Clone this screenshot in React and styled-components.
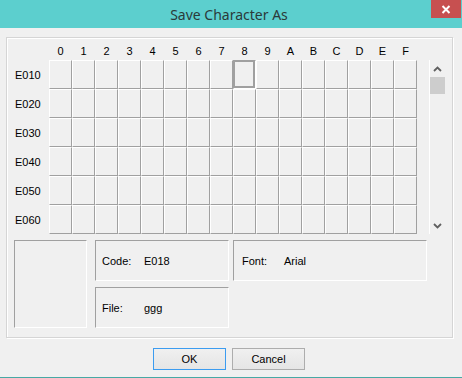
import React from 'react';
import styled, { createGlobalStyle } from 'styled-components';

const GlobalStyle = createGlobalStyle`
  html, body {
    margin: 0;
    padding: 0;
    background: #f0f0f0;
  }
`;

const Window = styled.div`
  width: 462px;
  height: 378px;
  box-sizing: border-box;
  background: #f0f0f0;
  border-bottom: 1px solid #47a9a5;
  display: flex;
  flex-direction: column;
  font-family: "Liberation Sans", Arial, sans-serif;
  font-size: 11px;
  color: #000;
`;

const TitleBar = styled.div`
  position: relative;
  height: 28px;
  flex: none;
  background: #5ccfce;
  display: flex;
  align-items: center;
  justify-content: center;
`;

const Title = styled.span`
  font-family: "Noto Sans", "Open Sans", sans-serif;
  font-size: 14px;
  color: #2b3a3a;
  padding-right: 4px;
`;

const CloseButton = styled.div`
  position: absolute;
  top: 0;
  right: 1px;
  width: 30px;
  height: 18px;
  background: #c75050;
  display: flex;
  align-items: center;
  justify-content: center;
`;

const Body = styled.div`
  padding: 9px 9px 0 6px;
`;

const Frame = styled.div`
  width: 447px;
  height: 301px;
  box-sizing: border-box;
  border: 1px solid #d5d5d5;
  box-shadow: inset 1px 1px 0 #fff, 1px 1px 0 #fff;
  display: flex;
  flex-direction: column;
`;

const HeaderRow = styled.div`
  display: grid;
  grid-template-columns: 42px repeat(16, 23px);
  height: 22px;
  box-sizing: border-box;
  padding-top: 7px;
  line-height: 13px;
`;

const ColHead = styled.span`
  text-align: center;
`;

const TableArea = styled.div`
  display: flex;
  height: 174px;
`;

const RowLabels = styled.div`
  width: 42px;
  display: flex;
  flex-direction: column;
`;

const RowLabel = styled.div`
  height: 29px;
  padding-left: 8px;
  display: flex;
  align-items: center;
  box-sizing: border-box;
`;

const CellGrid = styled.div`
  display: grid;
  grid-template-columns: repeat(16, 23px);
  grid-auto-rows: 29px;
`;

const Cell = styled.div`
  box-sizing: border-box;
  border: 1px solid;
  border-color: ${p => (p.$selected ? '#a0a0a0 #fff #fff #a0a0a0' : '#fff #a0a0a0 #a0a0a0 #fff')};
  box-shadow: ${p => (p.$selected ? 'inset 1px 1px 0 #a0a0a0, inset -2px -2px 0 #a0a0a0' : 'none')};
  background: #f0f0f0;
`;

const Scrollbar = styled.div`
  margin-left: 12px;
  width: 16px;
  box-sizing: border-box;
  border-left: 1px solid #fff;
  display: flex;
  flex-direction: column;
`;

const ArrowButton = styled.div`
  height: 17px;
  flex: none;
  display: flex;
  align-items: center;
  justify-content: center;
`;

const Track = styled.div`
  flex: 1;
`;

const Thumb = styled.div`
  height: 17px;
  background: #cdcdcd;
`;

const Details = styled.div`
  display: flex;
  margin-top: 6px;
  padding-left: 7px;
  height: 88px;
`;

const Sunken = styled.div`
  box-sizing: border-box;
  border: 1px solid;
  border-color: #a0a0a0 #fff #fff #a0a0a0;
`;

const Preview = styled(Sunken)`
  width: 73px;
  height: 88px;
`;

const InfoColumn = styled.div`
  display: flex;
  flex-direction: column;
  gap: 6px;
  margin-left: 8px;
`;

const InfoBox = styled(Sunken)`
  width: ${p => p.$width}px;
  height: 41px;
  display: flex;
  align-items: center;
  padding-left: ${p => p.$pad}px;
  margin-left: ${p => p.$offset || 0}px;
`;

const InfoLabel = styled.span`
  width: 42px;
  flex: none;
`;

const ButtonBar = styled.div`
  display: flex;
  gap: 6px;
  padding-left: 147px;
  margin-top: 10px;
`;

const Button = styled.button`
  width: 73px;
  height: 22px;
  box-sizing: border-box;
  border: 1px solid ${p => (p.$default ? '#3c9cf0' : '#adadad')};
  background: linear-gradient(#f0f0f0, #e5e5e5);
  font-family: "Liberation Sans", Arial, sans-serif;
  font-size: 11px;
  color: #000;
  padding: 0;
`;

const cols = ['0', '1', '2', '3', '4', '5', '6', '7', '8', '9', 'A', 'B', 'C', 'D', 'E', 'F'];
const rows = ['E010', 'E020', 'E030', 'E040', 'E050', 'E060'];

const Chevron = ({ down }) => (
  <svg width="9" height="6" viewBox="0 0 9 6">
    <polyline
      points={down ? '1,1 4.5,4.5 8,1' : '1,5 4.5,1.5 8,5'}
      fill="none"
      stroke="#606060"
      strokeWidth="1.8"
    />
  </svg>
);

export default function App() {
  return (
    <Window>
      <GlobalStyle />
      <TitleBar>
        <Title>Save Character As</Title>
        <CloseButton>
          <svg width="10" height="9" viewBox="0 0 10 9">
            <path d="M1.5 1 L8.5 8 M8.5 1 L1.5 8" stroke="#fff" strokeWidth="2" />
          </svg>
        </CloseButton>
      </TitleBar>
      <Body>
        <Frame>
          <HeaderRow>
            <span />
            {cols.map(c => (
              <ColHead key={c}>{c}</ColHead>
            ))}
          </HeaderRow>
          <TableArea>
            <RowLabels>
              {rows.map(r => (
                <RowLabel key={r}>{r}</RowLabel>
              ))}
            </RowLabels>
            <CellGrid>
              {rows.map((r, ri) =>
                cols.map((c, ci) => <Cell key={r + c} $selected={ri === 0 && ci === 8} />)
              )}
            </CellGrid>
            <Scrollbar>
              <ArrowButton>
                <Chevron />
              </ArrowButton>
              <Thumb />
              <Track />
              <ArrowButton>
                <Chevron down />
              </ArrowButton>
            </Scrollbar>
          </TableArea>
          <Details>
            <Preview />
            <InfoColumn>
              <InfoBox $width={134} $pad={6}>
                <InfoLabel>Code:</InfoLabel>
                <span>E018</span>
              </InfoBox>
              <InfoBox $width={134} $pad={6}>
                <InfoLabel>File:</InfoLabel>
                <span>ggg</span>
              </InfoBox>
            </InfoColumn>
            <div>
              <InfoBox $width={194} $pad={8} $offset={4}>
                <InfoLabel>Font:</InfoLabel>
                <span>Arial</span>
              </InfoBox>
            </div>
          </Details>
        </Frame>
        <ButtonBar>
          <Button $default>OK</Button>
          <Button>Cancel</Button>
        </ButtonBar>
      </Body>
    </Window>
  );
}
